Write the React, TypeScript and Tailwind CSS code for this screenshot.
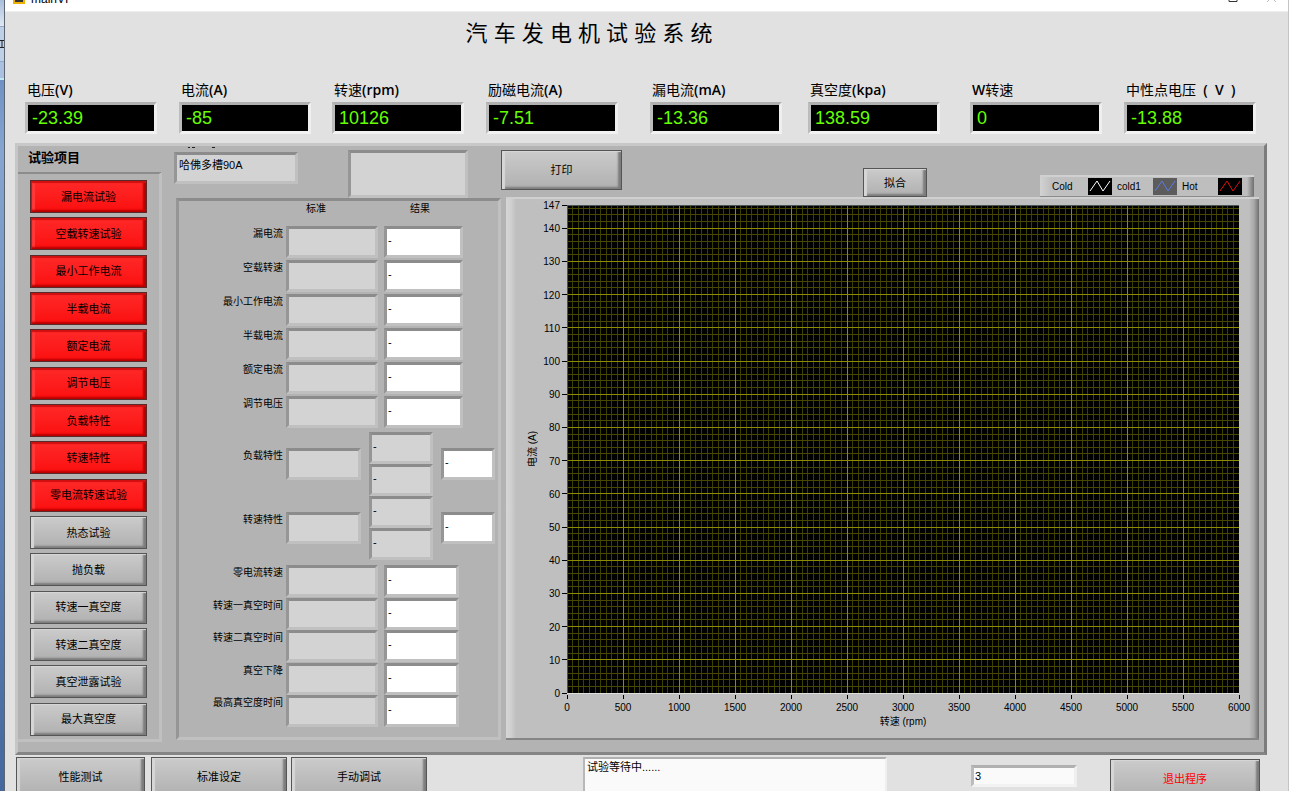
import { useState } from "react";
import type { ReactNode } from "react";

const readouts = [
  { name: "电压", unit: "(V)", value: "-23.39" },
  { name: "电流", unit: "(A)", value: "-85" },
  { name: "转速", unit: "(rpm)", value: "10126" },
  { name: "励磁电流", unit: "(A)", value: "-7.51" },
  { name: "漏电流", unit: "(mA)", value: "-13.36" },
  { name: "真空度", unit: "(kpa)", value: "138.59" },
  { prefix: "W", name: "转速", unit: "", value: "0" },
  { name: "中性点电压", unit: "  (  V  )", value: "-13.88" },
];

const tests = [
  { name: "漏电流试验", active: true },
  { name: "空载转速试验", active: true },
  { name: "最小工作电流", active: true },
  { name: "半载电流", active: true },
  { name: "额定电流", active: true },
  { name: "调节电压", active: true },
  { name: "负载特性", active: true },
  { name: "转速特性", active: true },
  { name: "零电流转速试验", active: true },
  { name: "热态试验", active: false },
  { name: "抛负载", active: false },
  { name: "转速一真空度", active: false },
  { name: "转速二真空度", active: false },
  { name: "真空泄露试验", active: false },
  { name: "最大真空度", active: false },
];

const upperRows = ["漏电流", "空载转速", "最小工作电流", "半载电流", "额定电流", "调节电压"];
const curveRows = ["负载特性", "转速特性"];
const lowerRows = ["零电流转速", "转速一真空时间", "转速二真空时间", "真空下降", "最高真空度时间"];

const legend = [
  { name: "Cold", stroke: "#ffffff", box: "bg-black" },
  { name: "cold1", stroke: "#5b7be0", box: "bg-[#5c5c5c]" },
  { name: "Hot", stroke: "#e01010", box: "bg-black" },
];

const X_MAX = 6000;
const Y_MAX = 147;

const range = (from: number, to: number, step: number) => {
  const list: number[] = [];
  for (let v = from; v <= to; v += step) list.push(v);
  return list;
};

const xPos = (v: number) => `${(v / X_MAX) * 100}%`;
const yPos = (v: number) => `${(1 - v / Y_MAX) * 100}%`;

const sunken =
  "border-3 border-t-[#8c8c8c] border-r-[#c0c0c0] border-b-[#c0c0c0] border-l-[#969696]";
const sunkenLight =
  "border-3 border-t-[#b0b0b0] border-r-[#efefef] border-b-[#f2f2f2] border-l-[#bcbcbc]";

function BevelButton({
  children,
  className,
  active = false,
}: {
  children: ReactNode;
  className: string;
  active?: boolean;
}) {
  const tone = active
    ? "border-[#5a2a2a] bg-linear-to-b from-[#ff2828] to-[#fb0c0c] shadow-[inset_1px_2px_1px_#d01010,inset_-3px_-2px_2px_#b80000,inset_4px_0_1px_#ff3a3a]"
    : "border-[#555555] bg-linear-to-b from-[#cbcbcb] to-[#b0b0b0] shadow-[inset_3px_1px_1px_#d6d6d6,inset_-3px_-2px_2px_#7c7c7c]";
  return (
    <button
      type="button"
      className={`shrink-0 border text-[11px] leading-4 ${tone} ${className}`}
    >
      {children}
    </button>
  );
}

function Field({
  label,
  value = "",
  white = false,
  className,
}: {
  label: string;
  value?: string;
  white?: boolean;
  className: string;
}) {
  return (
    <input
      readOnly
      aria-label={label}
      value={value}
      className={`h-8 shrink-0 pb-1 pl-px text-[11px] outline-none ${sunken} ${
        white ? "bg-white" : "bg-[#d3d3d3]"
      } ${className}`}
    />
  );
}

function RowLabel({ children }: { children: ReactNode }) {
  return (
    <span className="w-[104px] shrink-0 text-right text-[10px] leading-4">
      {children}
    </span>
  );
}

function ResultRow({ name, wide }: { name: string; wide: boolean }) {
  return (
    <div className="flex">
      <RowLabel>{name}</RowLabel>
      <Field label={`${name} 标准`} className="ml-[3px] w-[92px]" />
      <Field
        label={`${name} 结果`}
        value="-"
        white
        className={wide ? "ml-1.5 w-[79px]" : "ml-1.5 w-[75px]"}
      />
    </div>
  );
}

function CurveRow({ name }: { name: string }) {
  return (
    <div className="flex items-center">
      <div className="flex">
        <RowLabel>{name}</RowLabel>
        <Field label={`${name} 标准`} className="ml-[3px] w-[75px]" />
      </div>
      <div className="ml-2 flex flex-col">
        <Field label={`${name} 1`} value="-" className="w-16" />
        <Field label={`${name} 2`} value="-" className="w-16" />
      </div>
      <Field label={`${name} 结果`} value="-" white className="ml-2 w-[54px]" />
    </div>
  );
}

function Results() {
  return (
    <section className={`ml-0.5 flex flex-1 flex-col pb-2.5 ${sunken}`}>
      <div className="flex text-[10px] leading-4">
        <span className="ml-[107px] w-[60px] text-center">标准</span>
        <span className="ml-11 w-[60px] text-center">结果</span>
      </div>
      <div className="mt-[9px] flex flex-col gap-[2px]">
        {upperRows.map((name) => (
          <ResultRow key={name} name={name} wide />
        ))}
      </div>
      <div className="mt-1">
        {curveRows.map((name) => (
          <CurveRow key={name} name={name} />
        ))}
      </div>
      <div className="mt-[5px] flex flex-1 flex-col justify-between">
        {lowerRows.map((name) => (
          <ResultRow key={name} name={name} wide={false} />
        ))}
      </div>
    </section>
  );
}

function Legend() {
  return (
    <div className="flex h-[22px] w-[214px] items-center border-t-2 border-b border-t-[#d0d0d0] border-b-[#8c8c8c] bg-linear-to-r from-[#d2d2d2] via-[#c0c0c0] via-5% to-[#bdbdbd] pl-3 text-[10px]">
      {legend.map((item) => (
        <div key={item.name} className="flex shrink-0 items-center">
          <span className="w-9">{item.name}</span>
          <svg
            viewBox="0 0 24 17"
            className={`mr-[5px] h-[17px] w-6 ${item.box}`}
            fill="none"
            stroke={item.stroke}
          >
            <path d="M2 13 L9 3 L15 13 L22 3" />
          </svg>
        </div>
      ))}
      <span className="ml-auto h-full w-[7px] bg-linear-to-r from-[#bdbdbd] to-[#707070]" />
    </div>
  );
}

function Chart() {
  const yTicks = [...range(0, 140, 10), Y_MAX];
  return (
    <section className="flex min-h-0 flex-1 border-t-2 border-b-2 border-t-[#d0d0d0] border-b-[#858585] bg-[#bfbfbf]">
      <div className="w-2.5 bg-linear-to-r from-[#d6d6d6] via-[#d0d0d0] to-[#bfbfbf]" />
      <div className="relative z-10 grid flex-1 grid-cols-[34px_17px_1fr] grid-rows-[1fr_45px] pt-1.5 pr-2.5">
        <span className="rotate-180 self-center justify-self-center text-[10px] leading-4 [text-orientation:sideways] [writing-mode:vertical-rl]">
          电流 (A)
        </span>
        <svg className="h-full w-full overflow-visible" fontSize="10" textAnchor="end">
          {yTicks.map((v) => (
            <g key={v}>
              <line x1="12" x2="17" y1={yPos(v)} y2={yPos(v)} stroke="#000" shapeRendering="crispEdges" />
              <text x="10" y={yPos(v)} dy="4">
                {v}
              </text>
            </g>
          ))}
        </svg>
        <svg
          className="h-full w-full overflow-visible bg-black"
          shapeRendering="crispEdges"
          role="img"
          aria-label="电流 / 转速"
        >
          {range(50, 5950, 50).map((v) => (
            <line key={v} x1={xPos(v)} x2={xPos(v)} y1="0" y2="100%" stroke="#3f3f00" />
          ))}
          {range(2, 146, 2).map((v) => (
            <line key={v} x1="0" x2="100%" y1={yPos(v)} y2={yPos(v)} stroke="#484800" />
          ))}
          {range(500, 5500, 500).map((v) => (
            <line key={v} x1={xPos(v)} x2={xPos(v)} y1="0" y2="100%" stroke="#8c8c00" />
          ))}
          {range(10, 140, 10).map((v) => (
            <line key={v} x1="0" x2="100%" y1={yPos(v)} y2={yPos(v)} stroke="#8c8c00" />
          ))}
          <line x1="0" x2="100%" y1="0" y2="0" stroke="#4a5555" />
          <line x1="0" x2="0" y1="0" y2="100%" stroke="#4a5555" />
        </svg>
        <div className="col-start-3 flex flex-col border-t border-[#e0e0e0]">
          <svg className="h-5 w-full overflow-visible" fontSize="10" textAnchor="middle">
            {range(0, X_MAX, 500).map((v) => (
              <g key={v}>
                <line x1={xPos(v)} x2={xPos(v)} y1="1" y2="5" stroke="#000" shapeRendering="crispEdges" />
                <text x={xPos(v)} y="17">
                  {v}
                </text>
              </g>
            ))}
          </svg>
          <span className="text-center text-[10px] leading-4">转速 (rpm)</span>
        </div>
      </div>
      <div className="w-2.5 bg-linear-to-r from-[#bfbfbf] via-[#a8a8a8] to-[#707070]" />
    </section>
  );
}

// sliver of the desktop that shows beside the window
function DesktopEdge() {
  return (
    <div className="flex w-[5px] shrink-0 flex-col overflow-hidden border-r border-[#5c6470]">
      <div className="h-[26px] bg-linear-to-b from-[#a9bfdb] to-[#dfe8f2]" />
      <div className="h-9 border-t border-b border-[#8fa8cc] bg-[#bdd0e6] pt-3">
        <svg viewBox="0 0 4 10" className="h-2.5 w-1" fill="none" stroke="#222">
          <path d="M0 1.5 H4 M2 1.5 V8 M0 8.5 H4" />
        </svg>
      </div>
      <div className="h-[18px] border-b-2 border-[#bfe9f5] bg-[#a9c1de]" />
      <div className="flex-1 bg-linear-to-b from-[#6f92c4] via-[#86a5d0] via-10% to-[#44689f]" />
    </div>
  );
}

export default function App() {
  const [model, setModel] = useState("哈佛多槽90A");
  const [status, setStatus] = useState("试验等待中......");
  const [step, setStep] = useState("3");

  return (
    <div className="flex h-screen overflow-hidden bg-[#e1e1e1] font-['Liberation_Sans','Noto_Sans_CJK_SC',sans-serif] text-black">
      <DesktopEdge />
      <div className="flex min-w-0 flex-1 flex-col border-r border-[#c4c4c4]">
        <div className="flex h-3 shrink-0 items-start overflow-hidden border-b border-[#eeeeee] bg-white pr-3 pl-2">
          <svg className="h-1 w-3" viewBox="0 0 12 4">
            <rect width="12" height="4" fill="#f0b000" />
            <rect x="2" width="8" height="2" fill="#333" />
          </svg>
          <span className="-mt-[9px] ml-1.5 text-xs leading-4">mainVI</span>
          <svg className="ml-auto h-1 w-12" viewBox="0 0 48 4" fill="none">
            <path d="M1 0 V1.5 H9 V0" stroke="#333" />
            <path d="M41 0 L39 2 M46 0 L48 2" stroke="#bbb" />
          </svg>
        </div>

        <header className="shrink-0 pr-[31px] pl-5">
          <h1 className="mt-1.5 pr-[104px] text-center text-[22px] leading-8">
            汽 车 发 电 机 试 验 系 统
          </h1>
          <div className="mt-[30px] grid grid-cols-[154fr_153fr_154fr_164fr_158fr_162fr_154fr_133fr]">
            {readouts.map((item, i) => (
              <label key={i} className="block">
                <span className="block pl-0.5 font-['Open_Sans','Noto_Sans_CJK_SC',sans-serif] text-sm leading-5 whitespace-pre">
                  {item.prefix && <b className="font-semibold">{item.prefix}</b>}
                  {item.name}
                  <b className="font-semibold">{item.unit}</b>
                </span>
                <input
                  readOnly
                  value={item.value}
                  className={`mt-0.5 h-8 w-[132px] bg-black pl-1 text-lg text-[#66ff00] outline-none ${sunkenLight}`}
                />
              </label>
            ))}
          </div>
        </header>

        <main className="mt-[9px] mr-[21px] ml-2.5 flex min-h-0 flex-1 border-3 border-t-[#c8c8c8] border-r-[#7c7c7c] border-b-[#858585] border-l-[#c6c6c6] bg-[#b3b3b3] pb-3">
          <aside className="-mb-0.5 flex w-36 shrink-0 flex-col">
            <h2 className="h-[26px] pl-2.5 text-[13px] leading-6 font-bold">试验项目</h2>
            <div className="flex flex-1 flex-col justify-between border-t-2 border-r-3 border-b-3 border-t-[#8c8c8c] border-r-[#c0c0c0] border-b-[#c0c0c0] px-3 pt-1.5 pb-[3px]">
              {tests.map((test) => (
                <BevelButton key={test.name} active={test.active} className="h-[33px]">
                  {test.name}
                </BevelButton>
              ))}
            </div>
          </aside>

          <div className="ml-3 flex w-[327px] shrink-0 flex-col">
            <div className="flex h-[52px] items-start">
              <div className="flex flex-col">
                <svg className="h-1.5 w-[124px]" viewBox="0 0 124 6" stroke="#222">
                  <path d="M14 1.5 h2 M18 1.5 h3 M38 1.5 h3" />
                </svg>
                <input
                  aria-label="型号"
                  value={model}
                  onChange={(e) => setModel(e.target.value)}
                  className={`h-8 w-[124px] bg-[#d3d3d3] pb-2 pl-0.5 text-[11px] outline-none ${sunken}`}
                />
              </div>
              <input
                aria-label="备注"
                className={`mt-1 ml-[50px] h-12 w-[120px] bg-[#d3d3d3] text-[11px] outline-none ${sunken}`}
              />
            </div>
            <Results />
          </div>

          <div className="mr-[5px] ml-[5px] flex min-w-0 flex-1 flex-col">
            <div className="flex h-[51px] items-start pr-[5px]">
              <BevelButton className="-ml-[5px] mt-1 h-10 w-[121px]">打印</BevelButton>
              <div className="flex flex-1 justify-end self-end">
                <BevelButton className="h-[29px] w-16">拟合</BevelButton>
                <div className="ml-[113px] self-end">
                  <Legend />
                </div>
              </div>
            </div>
            <Chart />
          </div>
        </main>

        <footer className="flex h-9 shrink-0 items-start overflow-hidden pt-0.5 pr-7 pl-[11px]">
          <BevelButton className="h-10 w-[129px]">性能测试</BevelButton>
          <BevelButton className="ml-1.5 h-10 w-[136px]">标准设定</BevelButton>
          <BevelButton className="ml-1 h-10 w-[136px]">手动调试</BevelButton>
          <textarea
            aria-label="状态"
            value={status}
            onChange={(e) => setStatus(e.target.value)}
            className="ml-auto h-12 w-[304px] resize-none border-2 border-t-[#b0b0b0] border-r-[#efefef] border-b-[#efefef] border-l-[#b8b8b8] bg-[#fafafa] px-0.5 text-[11px] leading-4 outline-none"
          />
          <input
            aria-label="步骤"
            value={step}
            onChange={(e) => setStep(e.target.value)}
            className={`mt-2 ml-[84px] h-[22px] w-[106px] bg-[#fafafa] pl-px text-[11px] outline-none ${sunkenLight}`}
          />
          <BevelButton className="mt-0.5 ml-[33px] h-10 w-[150px] text-[#ff0000]">
            退出程序
          </BevelButton>
        </footer>
      </div>
    </div>
  );
}
